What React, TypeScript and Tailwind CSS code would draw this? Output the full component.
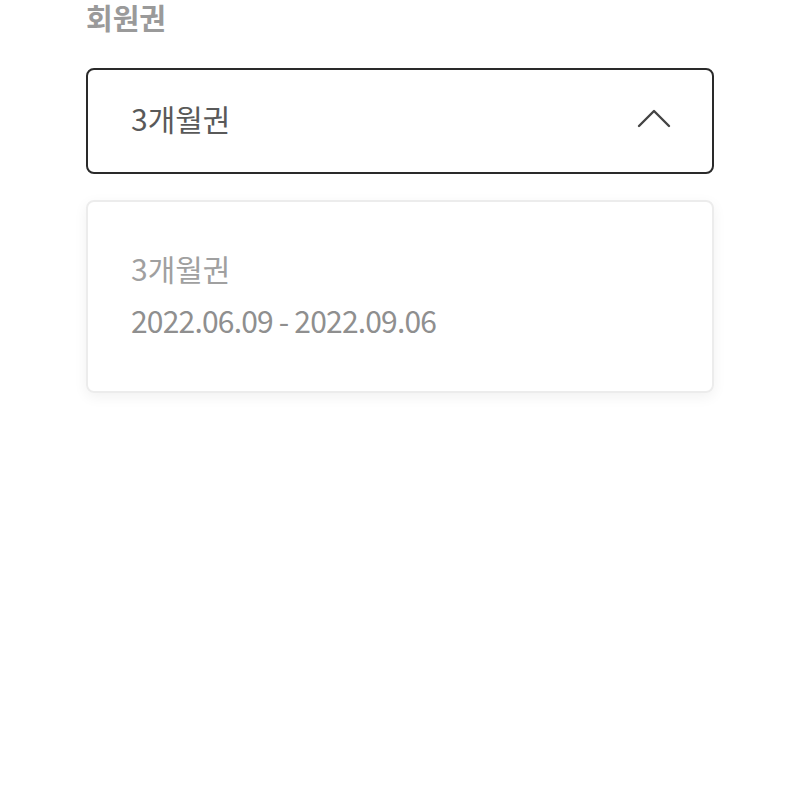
import React from "react";

export default function App() {
  return (
    <div
      className="w-[800px] h-[800px] bg-white overflow-hidden"
      style={{ fontFamily: '"Noto Sans CJK KR", "Noto Sans", sans-serif' }}
    >
      <div className="px-[86px]">
        <div className="text-[29px] leading-[38px] font-bold text-[#9a9a9a] mt-[-2px]">
          회원권
        </div>
        <div className="mt-[32px] h-[106px] border-2 border-[#2a2a2a] rounded-[8px] flex items-center justify-between pl-[43px] pr-[41px] pb-[6px]">
          <span className="text-[30px] text-[#595959] leading-none">3개월권</span>
          <svg width="34" height="20" viewBox="0 0 34 20" fill="none">
            <path d="M2 18 L17 3 L32 18" stroke="#444444" strokeWidth="2.4" strokeLinecap="round" strokeLinejoin="round" />
          </svg>
        </div>
        <div className="mt-[26px] h-[193px] border-2 border-[#ececec] rounded-[8px] shadow-[0_4px_14px_rgba(0,0,0,0.06)] pl-[43px] pt-[45px]">
          <div className="text-[30px] text-[#a0a0a0] leading-[42px]">3개월권</div>
          <div className="text-[30px] text-[#8f8f8f] tracking-[-0.8px] leading-[42px] mt-[10px]">
            2022.06.09 - 2022.09.06
          </div>
        </div>
      </div>
    </div>
  );
}
